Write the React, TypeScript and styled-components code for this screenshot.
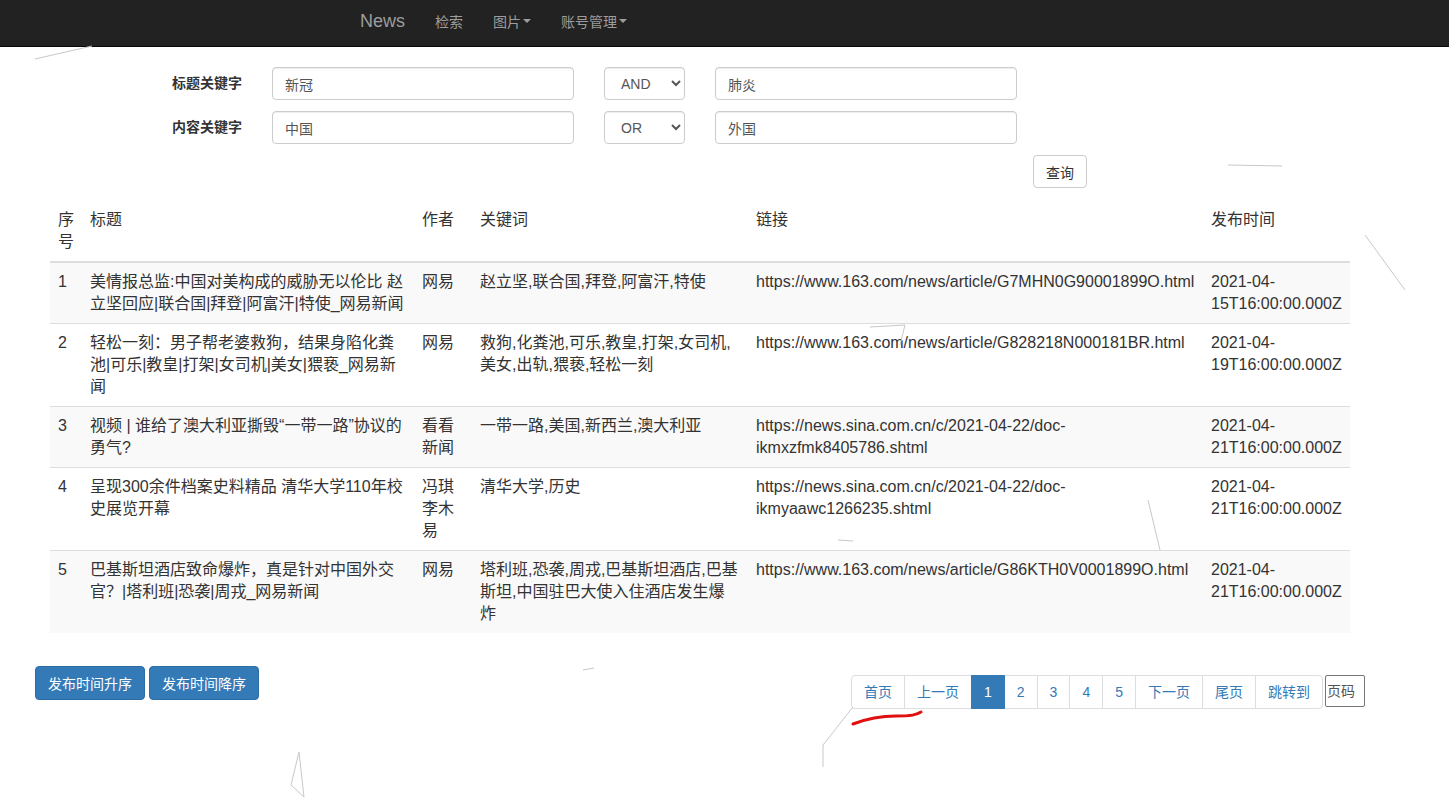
import React from 'react';
import styled, { createGlobalStyle } from 'styled-components';

const GlobalStyle = createGlobalStyle`
  html, body {
    margin: 0;
    padding: 0;
    background: #fff;
  }
  body {
    font-family: "Liberation Sans", "Noto Sans CJK SC", Arial, sans-serif;
    font-size: 14px;
    color: #333;
  }
  * { box-sizing: border-box; }
`;

const Page = styled.div`
  position: relative;
  width: 1449px;
  min-height: 808px;
  overflow: hidden;
`;

const Navbar = styled.nav`
  height: 47px;
  background: #222;
  border-bottom: 1px solid #080808;
  display: flex;
  align-items: center;
  padding-left: 345px;
  padding-bottom: 4px;
`;

const Brand = styled.a`
  color: #9d9d9d;
  font-size: 18px;
  padding: 0 15px;
  text-decoration: none;
`;

const NavLink = styled.a`
  color: #9d9d9d;
  font-size: 14px;
  padding: 0 15px;
  text-decoration: none;
  display: flex;
  align-items: center;
`;

const Caret = styled.span`
  display: inline-block;
  width: 0;
  height: 0;
  margin-left: 2px;
  border-top: 4px solid #9d9d9d;
  border-left: 4px solid transparent;
  border-right: 4px solid transparent;
`;

const SearchForm = styled.form`
  margin-top: 20px;
  display: grid;
  grid-template-columns: 242px 302px 81px 302px;
  column-gap: 30px;
  row-gap: 11px;
`;

const Label = styled.label`
  text-align: right;
  font-weight: 700;
  font-size: 14px;
  line-height: 33px;
  color: #333;
`;

const TextInput = styled.input`
  height: 33px;
  padding: 6px 12px;
  font-size: 14px;
  font-family: inherit;
  color: #555;
  background: #fff;
  border: 1px solid #ccc;
  border-radius: 4px;
  box-shadow: inset 0 1px 1px rgba(0, 0, 0, 0.075);
  outline: none;
`;

const Select = styled.select`
  height: 33px;
  padding: 0 8px 0 12px;
  font-size: 14px;
  font-family: inherit;
  color: #555;
  background: #fff;
  border: 1px solid #ccc;
  border-radius: 4px;
  box-shadow: inset 0 1px 1px rgba(0, 0, 0, 0.075);
`;

const QueryRow = styled.div`
  grid-column: 1 / -1;
  display: flex;
  padding-left: 1033px;
`;

const DefaultButton = styled.button`
  flex-shrink: 0;
  height: 33px;
  padding: 0 12px;
  font-size: 14px;
  font-family: inherit;
  white-space: nowrap;
  color: #333;
  background: #fff;
  border: 1px solid #ccc;
  border-radius: 4px;
`;

const Table = styled.table`
  margin: 13px 0 0 50px;
  width: 1300px;
  table-layout: fixed;
  border-collapse: collapse;
  border-spacing: 0;
  font-size: 16px;
  line-height: 22px;
`;

const Col = styled.col<{ $w: number }>`
  width: ${(p) => p.$w}px;
`;

const Th = styled.th`
  text-align: left;
  vertical-align: top;
  font-weight: 400;
  padding: 8px;
  border-bottom: 2px solid #ddd;
`;

const Tr = styled.tr<{ $striped: boolean }>`
  background: ${(p) => (p.$striped ? '#f9f9f9' : 'transparent')};
`;

const Td = styled.td`
  vertical-align: top;
  padding: 8px;
  border-top: 1px solid #ddd;
  overflow: visible;
  white-space: normal;
`;

const BottomBar = styled.div`
  display: flex;
  align-items: flex-start;
  justify-content: space-between;
  padding: 33px 84px 0 35px;
`;

const SortGroup = styled.div`
  display: flex;
  gap: 4px;
`;

const PrimaryButton = styled.button`
  height: 34px;
  padding: 0 12px;
  font-size: 14px;
  font-family: inherit;
  color: #fff;
  background: #337ab7;
  border: 1px solid #2e6da4;
  border-radius: 4px;
`;

const Pager = styled.div`
  margin-top: 9px;
  display: flex;
  align-items: flex-start;
`;

const PageList = styled.ul`
  display: flex;
  list-style: none;
  margin: 0;
  padding: 0;
`;

const PageItem = styled.li<{ $active?: boolean; $first?: boolean; $last?: boolean }>`
  height: 34px;
  line-height: 32px;
  padding: 0 12px;
  margin-left: ${(p) => (p.$first ? '0' : '-1px')};
  font-size: 14px;
  color: ${(p) => (p.$active ? '#fff' : '#337ab7')};
  background: ${(p) => (p.$active ? '#337ab7' : '#fff')};
  border: 1px solid ${(p) => (p.$active ? '#337ab7' : '#ddd')};
  border-radius: ${(p) => (p.$first ? '4px 0 0 4px' : p.$last ? '0 4px 4px 0' : '0')};
  position: ${(p) => (p.$active ? 'relative' : 'static')};
`;

const PageInput = styled.input`
  margin-left: 2px;
  width: 40px;
  height: 32px;
  padding: 0 1px;
  font-size: 14px;
  font-family: inherit;
  border: 1px solid #767676;
  border-radius: 2px;
  outline: none;
  &::placeholder {
    color: #555;
  }
`;

const Overlay = styled.svg`
  position: absolute;
  left: 0;
  top: 0;
  pointer-events: none;
`;

const rows = [
  {
    id: 1,
    title: '美情报总监:中国对美构成的威胁无以伦比 赵立坚回应|联合国|拜登|阿富汗|特使_网易新闻',
    author: '网易',
    keywords: '赵立坚,联合国,拜登,阿富汗,特使',
    link: 'https://www.163.com/news/article/G7MHN0G90001899O.html',
    time: '2021-04-15T16:00:00.000Z',
  },
  {
    id: 2,
    title: '轻松一刻：男子帮老婆救狗，结果身陷化粪池|可乐|教皇|打架|女司机|美女|猥亵_网易新闻',
    author: '网易',
    keywords: '救狗,化粪池,可乐,教皇,打架,女司机,美女,出轨,猥亵,轻松一刻',
    link: 'https://www.163.com/news/article/G828218N000181BR.html',
    time: '2021-04-19T16:00:00.000Z',
  },
  {
    id: 3,
    title: '视频 | 谁给了澳大利亚撕毁“一带一路”协议的勇气?',
    author: '看看新闻',
    keywords: '一带一路,美国,新西兰,澳大利亚',
    link: 'https://news.sina.com.cn/c/2021-04-22/doc-ikmxzfmk8405786.shtml',
    time: '2021-04-21T16:00:00.000Z',
  },
  {
    id: 4,
    title: '呈现300余件档案史料精品 清华大学110年校史展览开幕',
    author: '冯琪李木易',
    keywords: '清华大学,历史',
    link: 'https://news.sina.com.cn/c/2021-04-22/doc-ikmyaawc1266235.shtml',
    time: '2021-04-21T16:00:00.000Z',
  },
  {
    id: 5,
    title: '巴基斯坦酒店致命爆炸，真是针对中国外交官？|塔利班|恐袭|周戎_网易新闻',
    author: '网易',
    keywords: '塔利班,恐袭,周戎,巴基斯坦酒店,巴基斯坦,中国驻巴大使入住酒店发生爆炸',
    link: 'https://www.163.com/news/article/G86KTH0V0001899O.html',
    time: '2021-04-21T16:00:00.000Z',
  },
];

const pages = ['首页', '上一页', '1', '2', '3', '4', '5', '下一页', '尾页', '跳转到'];

// faint lines from the particle background
const strands: [number, number, number, number][] = [
  [35, 59, 92, 46],
  [1228, 165, 1282, 166],
  [1365, 235, 1405, 290],
  [905, 325, 870, 327],
  [905, 325, 900, 345],
  [838, 540, 853, 541],
  [1148, 500, 1160, 550],
  [299, 752, 304, 797],
  [299, 752, 291, 785],
  [291, 785, 304, 797],
  [853, 707, 823, 745],
  [823, 745, 823, 767],
  [583, 670, 594, 668],
];

export default function App() {
  return (
    <Page>
      <GlobalStyle />
      <Navbar>
        <Brand>News</Brand>
        <NavLink>检索</NavLink>
        <NavLink>
          图片<Caret />
        </NavLink>
        <NavLink>
          账号管理<Caret />
        </NavLink>
      </Navbar>

      <SearchForm onSubmit={(e) => e.preventDefault()}>
        <Label>标题关键字</Label>
        <TextInput defaultValue="新冠" />
        <Select defaultValue="AND">
          <option>AND</option>
          <option>OR</option>
        </Select>
        <TextInput defaultValue="肺炎" />

        <Label>内容关键字</Label>
        <TextInput defaultValue="中国" />
        <Select defaultValue="OR">
          <option>AND</option>
          <option>OR</option>
        </Select>
        <TextInput defaultValue="外国" />

        <QueryRow>
          <DefaultButton type="submit">查询</DefaultButton>
        </QueryRow>
      </SearchForm>

      <Table>
        <colgroup>
          <Col $w={32} />
          <Col $w={332} />
          <Col $w={58} />
          <Col $w={276} />
          <Col $w={455} />
          <Col $w={147} />
        </colgroup>
        <thead>
          <tr>
            <Th>序号</Th>
            <Th>标题</Th>
            <Th>作者</Th>
            <Th>关键词</Th>
            <Th>链接</Th>
            <Th>发布时间</Th>
          </tr>
        </thead>
        <tbody>
          {rows.map((r, i) => (
            <Tr key={r.id} $striped={i % 2 === 0}>
              <Td>{r.id}</Td>
              <Td>{r.title}</Td>
              <Td>{r.author}</Td>
              <Td>{r.keywords}</Td>
              <Td>{r.link}</Td>
              <Td>{r.time}</Td>
            </Tr>
          ))}
        </tbody>
      </Table>

      <BottomBar>
        <SortGroup>
          <PrimaryButton>发布时间升序</PrimaryButton>
          <PrimaryButton>发布时间降序</PrimaryButton>
        </SortGroup>
        <Pager>
          <PageList>
            {pages.map((p, i) => (
              <PageItem
                key={p}
                $active={p === '1'}
                $first={i === 0}
                $last={i === pages.length - 1}
              >
                {p}
              </PageItem>
            ))}
          </PageList>
          <PageInput placeholder="页码" />
        </Pager>
      </BottomBar>

      <Overlay width="1449" height="808" viewBox="0 0 1449 808">
        {strands.map(([x1, y1, x2, y2], i) => (
          <line key={i} x1={x1} y1={y1} x2={x2} y2={y2} stroke="#c8c8c8" strokeWidth="1" />
        ))}
        <path
          d="M853 724 C 866 719, 880 716, 896 716 S 916 715, 921 712"
          fill="none"
          stroke="#e01010"
          strokeWidth="3"
          strokeLinecap="round"
        />
      </Overlay>
    </Page>
  );
}
